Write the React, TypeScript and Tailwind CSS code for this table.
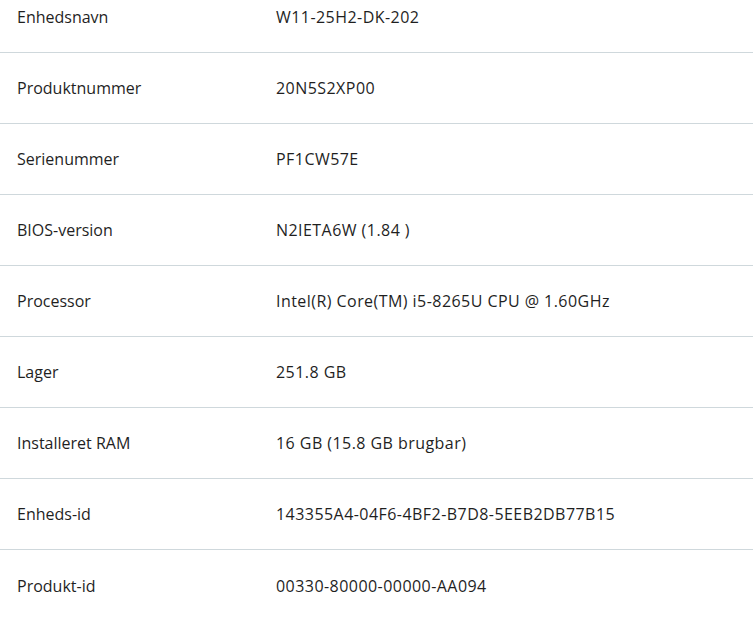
const rows: [string, string][] = [
  ["Enhedsnavn", "W11-25H2-DK-202"],
  ["Produktnummer", "20N5S2XP00"],
  ["Serienummer", "PF1CW57E"],
  ["BIOS-version", "N2IETA6W (1.84 )"],
  ["Processor", "Intel(R) Core(TM) i5-8265U CPU @ 1.60GHz"],
  ["Lager", "251.8 GB"],
  ["Installeret RAM", "16 GB (15.8 GB brugbar)"],
  ["Enheds-id", "143355A4-04F6-4BF2-B7D8-5EEB2DB77B15"],
  ["Produkt-id", "00330-80000-00000-AA094"],
];

export default function App() {
  return (
    <div
      className="w-[753px] h-[619px] overflow-hidden bg-white text-[#1f1f1f]"
      style={{ fontFamily: '"Open Sans", "Noto Sans", sans-serif' }}
    >
      <div className="-mt-[18px]">
        {rows.map(([label, value], i) => (
          <div
            key={label}
            className={`flex items-center h-[71px] text-[16px] ${
              i < rows.length - 1 ? "border-b border-[#cfd8dc]" : ""
            }`}
          >
            <div className="w-[276px] pl-[17px] shrink-0">{label}</div>
            <div className="tracking-[0.45px]">{value}</div>
          </div>
        ))}
      </div>
    </div>
  );
}
